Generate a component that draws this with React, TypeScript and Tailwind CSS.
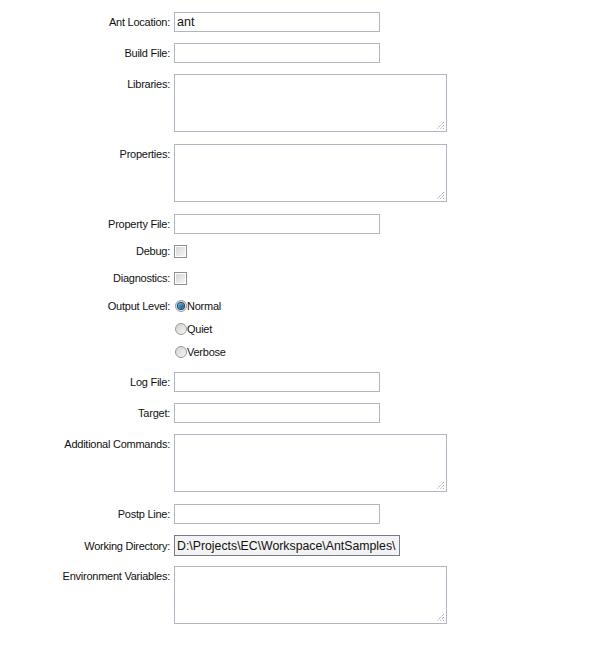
import React from 'react';

type Row =
  | { kind: 'input'; label: string; mt: string; value?: string }
  | { kind: 'area'; label: string; mt: string }
  | { kind: 'check'; label: string; mt: string }
  | { kind: 'radio'; label: string; text: string; checked?: boolean; mt: string }
  | { kind: 'dir'; label: string; mt: string; value: string };

const rows: Row[] = [
  { kind: 'input', label: 'Ant Location:', mt: 'mt-0', value: 'ant' },
  { kind: 'input', label: 'Build File:', mt: 'mt-[11px]' },
  { kind: 'area', label: 'Libraries:', mt: 'mt-[11px]' },
  { kind: 'area', label: 'Properties:', mt: 'mt-[12px]' },
  { kind: 'input', label: 'Property File:', mt: 'mt-[12px]' },
  { kind: 'check', label: 'Debug:', mt: 'mt-[10px]' },
  { kind: 'check', label: 'Diagnostics:', mt: 'mt-[13px]' },
  { kind: 'radio', label: 'Output Level:', text: 'Normal', checked: true, mt: 'mt-[14px]' },
  { kind: 'radio', label: '', text: 'Quiet', mt: 'mt-[9px]' },
  { kind: 'radio', label: '', text: 'Verbose', mt: 'mt-[9px]' },
  { kind: 'input', label: 'Log File:', mt: 'mt-[13px]' },
  { kind: 'input', label: 'Target:', mt: 'mt-[11px]' },
  { kind: 'area', label: 'Additional Commands:', mt: 'mt-[11px]' },
  { kind: 'input', label: 'Postp Line:', mt: 'mt-[12px]' },
  { kind: 'dir', label: 'Working Directory:', mt: 'mt-[11px]', value: 'D:\\Projects\\EC\\Workspace\\AntSamples\\' },
  { kind: 'area', label: 'Environment Variables:', mt: 'mt-[10px]' },
];

function Grip() {
  return (
    <svg className="absolute right-[2px] bottom-[2px]" width="9" height="9" viewBox="0 0 9 9">
      <path d="M8 1L1 8M8 4L4 8M8 7L7 8" stroke="#8a8a8a" strokeWidth="1" strokeDasharray="1 1" />
    </svg>
  );
}

function Checkbox() {
  return (
    <span className="block w-[13px] h-[13px] border border-[#8f8f8f] bg-white p-px">
      <span className="block w-full h-full bg-gradient-to-br from-[#d6d6d6] to-[#f6f6f6]" />
    </span>
  );
}

function Radio({ checked }: { checked?: boolean }) {
  return (
    <span className="flex items-center justify-center w-[12px] h-[12px] rounded-full border border-[#9a9a9a] bg-gradient-to-br from-[#d2d2d2] to-[#f7f7f7]">
      {checked && (
        <span className="block w-[6px] h-[6px] rounded-full bg-gradient-to-br from-[#5fb3e6] to-[#0f4f86] ring-1 ring-[#1b3f66]" />
      )}
    </span>
  );
}

export default function App() {
  return (
    <div className="w-[600px] h-[650px] bg-white pt-[12px] text-[11px] tracking-[-0.25px] leading-[14px] text-[#111] font-['Liberation_Sans',Arial,sans-serif]">
      {rows.map((row, i) => {
        const top = row.kind === 'area';
        return (
          <div key={i} className={`flex ${top ? 'items-start' : 'items-center'} ${row.mt}`}>
            <div className={`w-[174px] shrink-0 pr-[4px] text-right whitespace-nowrap ${top ? 'pt-[3px]' : ''}`}>
              {row.label}
            </div>
            {row.kind === 'input' && (
              <input
                readOnly
                defaultValue={row.value ?? ''}
                className="w-[206px] h-[20px] border border-[#b1b5c4] bg-white px-[2px] text-[12.5px] tracking-normal text-[#111] outline-none"
              />
            )}
            {row.kind === 'dir' && (
              <input
                readOnly
                defaultValue={row.value}
                className="w-[226px] h-[21px] border border-[#767b90] bg-[#f3f3f3] pl-[2px] pr-0 text-[12.3px] tracking-normal text-[#111] outline-none"
              />
            )}
            {row.kind === 'area' && (
              <div className="relative">
                <textarea readOnly className="block w-[273px] h-[58px] border border-[#b1b5c4] bg-white resize-none outline-none" />
                <Grip />
              </div>
            )}
            {row.kind === 'check' && (
              <div className="h-[14px] flex items-center">
                <Checkbox />
              </div>
            )}
            {row.kind === 'radio' && (
              <div className="h-[14px] flex items-center pl-px">
                <Radio checked={row.checked} />
                <span>{row.text}</span>
              </div>
            )}
          </div>
        );
      })}
    </div>
  );
}
